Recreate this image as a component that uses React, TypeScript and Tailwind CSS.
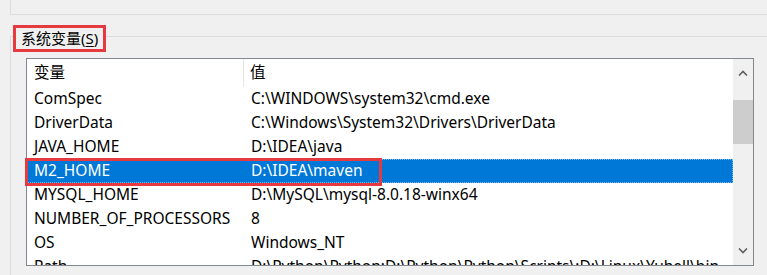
import React from 'react';

interface EnvVar {
  name: string;
  value: string;
}

const vars: EnvVar[] = [
  { name: 'ComSpec', value: 'C:\\WINDOWS\\system32\\cmd.exe' },
  { name: 'DriverData', value: 'C:\\Windows\\System32\\Drivers\\DriverData' },
  { name: 'JAVA_HOME', value: 'D:\\IDEA\\java' },
  { name: 'M2_HOME', value: 'D:\\IDEA\\maven' },
  { name: 'MYSQL_HOME', value: 'D:\\MySQL\\mysql-8.0.18-winx64' },
  { name: 'NUMBER_OF_PROCESSORS', value: '8' },
  { name: 'OS', value: 'Windows_NT' },
  { name: 'Path', value: 'D:\\Python\\Python;D:\\Python\\Python\\Scripts\\;D:\\Linux\\Yuhell\\bin' },
];

const SELECTED = 'M2_HOME';

export default function App() {
  return (
    <div
      className="w-[767px] h-[275px] bg-[#f0f0f0] overflow-hidden text-[15.5px] text-black"
      style={{ fontFamily: '"Noto Sans", "Noto Sans CJK SC", sans-serif' }}
    >
      {/* previous group box edge */}
      <div className="pl-[10px]">
        <div className="h-[15px] border-l border-b border-[#dcdcdc]" />
      </div>

      {/* system variables group */}
      <div className="relative mt-[21px] ml-[10px] h-[300px] border-l border-t border-[#dcdcdc]">
        <div className="absolute left-[2px] top-[-12px] w-[93px] h-[27px] border-[3px] border-[#e53a40] bg-[#f0f0f0] flex items-center pl-[5px] leading-none text-[15px]">
          <span>
            系统变量(<span className="underline underline-offset-2">S</span>)
          </span>
        </div>

        {/* list view */}
        <div className="relative ml-[15px] mt-[21px] w-[728px] h-[208px] border border-[#828790] bg-white flex">
          <div className="flex-1 overflow-hidden">
            <div className="h-[28px] flex items-center">
              <div className="w-[217px] h-full pl-[7px] flex items-center border-r border-[#e5e5e5]">变量</div>
              <div className="pl-[6px]">值</div>
            </div>
            {vars.map((v) => {
              const sel = v.name === SELECTED;
              return (
                <div
                  key={v.name}
                  className={`h-[24px] flex items-center whitespace-nowrap ${
                    sel ? 'bg-[#0078d7] text-white outline-1 outline-dotted outline-[#7fb6e6] -outline-offset-1' : ''
                  }`}
                >
                  <div className="w-[217px] pl-[7px]">{v.name}</div>
                  <div className="pl-[7px]">{v.value}</div>
                </div>
              );
            })}
          </div>

          {/* scrollbar */}
          <div className="w-[20px] bg-[#f0f0f0] flex flex-col items-center">
            <div className="h-[28px] w-full flex items-center justify-center">
              <svg width="10" height="6" viewBox="0 0 10 6">
                <path d="M1 5.5 L5 1.5 L9 5.5" fill="none" stroke="#606060" strokeWidth="1.6" />
              </svg>
            </div>
            <div className="mt-[13px] w-full h-[44px] bg-[#cdcdcd]" />
            <div className="flex-1" />
            <div className="h-[28px] w-full flex items-center justify-center">
              <svg width="10" height="6" viewBox="0 0 10 6">
                <path d="M1 0.5 L5 4.5 L9 0.5" fill="none" stroke="#606060" strokeWidth="1.6" />
              </svg>
            </div>
          </div>

          {/* highlight around selected row */}
          <div className="absolute left-[-2px] top-[99px] w-[357px] h-[28px] border-[3px] border-[#e53a40]" />
        </div>
      </div>
    </div>
  );
}
